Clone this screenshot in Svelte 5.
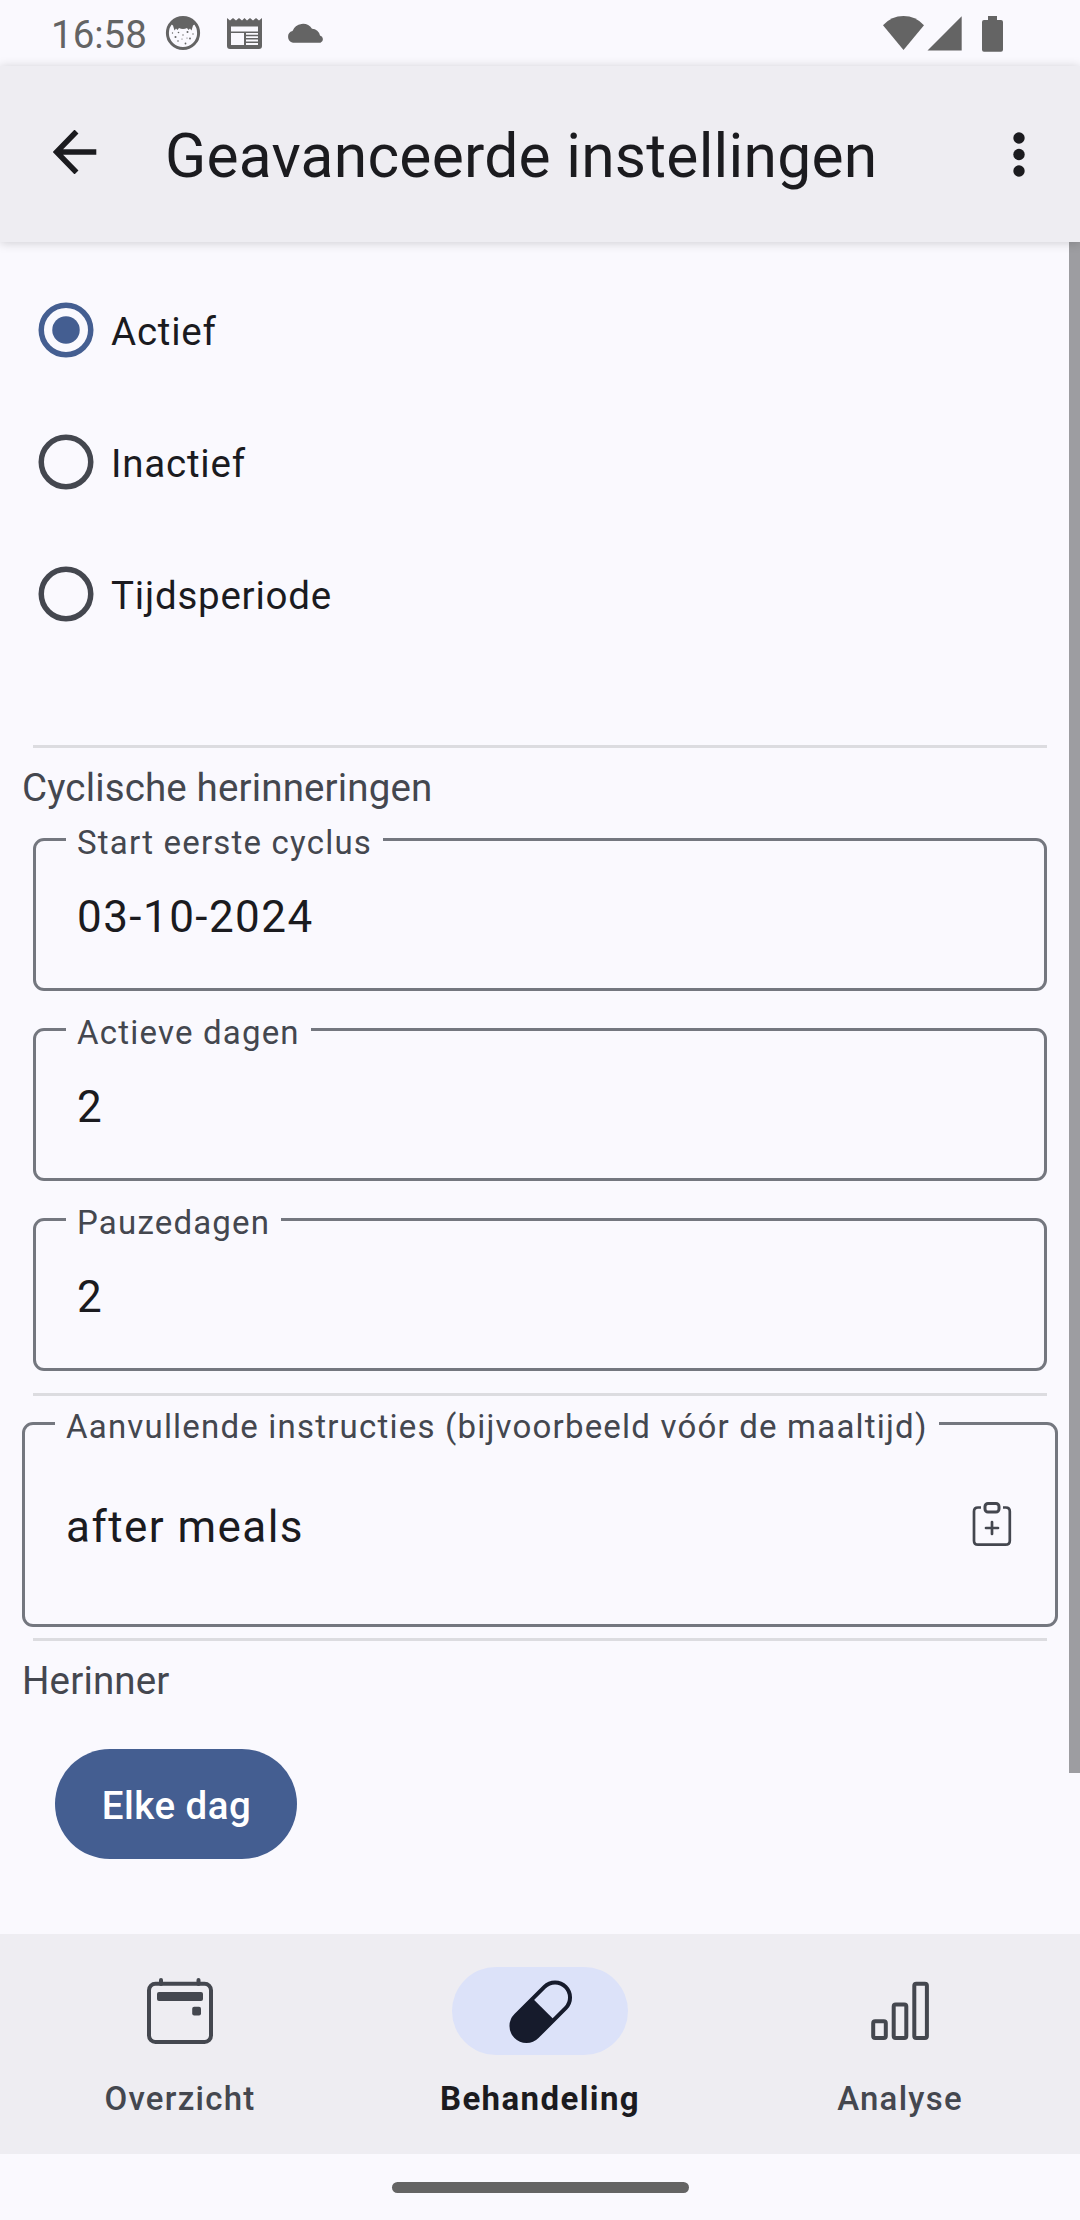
<script>
  let status = $state('Actief');
  const statuses = ['Actief', 'Inactief', 'Tijdsperiode'];
  const cycleFields = [
    { label: 'Start eerste cyclus', value: '03-10-2024' },
    { label: 'Actieve dagen', value: '2' },
    { label: 'Pauzedagen', value: '2' }
  ];
</script>

<div class="screen">
  <div class="statusbar">
    <span class="time">16:58</span>
    <svg class="cat" width="36" height="36" viewBox="0 0 36 36">
      <circle cx="18" cy="18" r="15.6" fill="none" stroke="#646464" stroke-width="3" />
      <path d="M8 6 Q18 0 28 6 L30 9 L28 10.500 L26.500 15.500 L25 13.500 L23.500 15 L22 13 Q18 15 14 13 L12.500 15 L11 13.500 L9.500 15.500 L8 10.500 L6 9 Z" fill="#646464" />
      <g fill="#646464">
        <circle cx="10.500" cy="22" r="1" /><circle cx="22.500" cy="17" r="1" /><circle cx="13.500" cy="17.500" r=".8" />
        <circle cx="18" cy="20" r=".7" /><circle cx="13" cy="26" r=".8" /><circle cx="20.500" cy="28.500" r=".9" />
        <circle cx="25" cy="23.500" r=".9" /><circle cx="28" cy="19" r=".7" /><circle cx="7.500" cy="18" r=".7" />
        <circle cx="17" cy="24" r=".6" /><circle cx="22" cy="23" r=".6" />
      </g>
    </svg>
    <svg class="news" width="35" height="31" viewBox="0 0 35 31">
      <path d="M0 0 L3 2.500 L6 0 L9 2.500 L12 0 L15 2.500 L17.500 0 L20 2.500 L23 0 L26 2.500 L29 0 L32 2.500 L35 0 V28 Q35 31 32 31 H3 Q0 31 0 28 Z" fill="#646464" />
      <path d="M4 8.500H31V13.500H4ZM4 15H17V27H4ZM19 15H31V16.800H19ZM19 18.300H31V20.100H19ZM19 21.600H31V23.400H19ZM19 25H31V27H19Z" fill="#faf9fe" />
    </svg>
    <svg class="cloud" width="38" height="21" viewBox="0 0 38 21">
      <path d="M6 20.700 A6 6 0 0 1 5.500 9 A11 11 0 0 1 25 6.800 A8 8 0 0 1 33 13.600 A3.700 3.700 0 0 1 33.500 20.700 Z" fill="#646464" />
    </svg>
    <svg class="system" width="124" height="38" viewBox="0 0 124 38">
      <path d="M20.500 36 L0 11.200 Q8.500 2 20.500 2 T41 11.200 Z" fill="#646464" />
      <path d="M44.500 36.500 L78.700 2.300 V36.500 Z" fill="#646464" />
      <path d="M105 2H114V6H118Q120 6 120 8V35.700Q120 37.700 118 37.700H101Q99 37.700 99 35.700V8Q99 6 101 6H105Z" fill="#646464" />
    </svg>
  </div>

  <header class="appbar">
    <svg class="back" width="44" height="44" viewBox="0 0 44 44">
      <path d="M23.500 1.500 L3.500 22 L23.500 42.500 M3.500 22 H43.300" fill="none" stroke="#1b1b1f" stroke-width="5.500" />
    </svg>
    <h1>Geavanceerde instellingen</h1>
    <svg class="more" width="12" height="45" viewBox="0 0 12 45">
      <g fill="#1b1b1f"><circle cx="6" cy="6" r="5.700" /><circle cx="6" cy="22.500" r="5.700" /><circle cx="6" cy="39" r="5.700" /></g>
    </svg>
  </header>

  <main>
    <div class="radios">
      {#each statuses as s}
        <label class="radio" class:on={s === status}>
          <input type="radio" name="status" value={s} bind:group={status} />
          <svg class="ring" width="56" height="56" viewBox="0 0 56 56">
            <circle cx="28" cy="28" r="24.750" fill="none" stroke="currentColor" stroke-width="5.500" />
            {#if s === status}<circle cx="28" cy="28" r="13.750" fill="currentColor" />{/if}
          </svg>
          <span class="name">{s}</span>
        </label>
      {/each}
    </div>

    <hr />
    <h2>Cyclische herinneringen</h2>
    <div class="fields">
      {#each cycleFields as f}
        <fieldset>
          <legend><span>{f.label}</span></legend>
          <div class="value">{f.value}</div>
        </fieldset>
      {/each}
    </div>

    <hr />
    <fieldset class="wide">
      <legend><span>Aanvullende instructies (bijvoorbeeld vóór de maaltijd)</span></legend>
      <div class="value">
        <span>after meals</span>
        <svg width="44" height="46" viewBox="0 0 44 46">
          <g fill="none" stroke="#44474f" stroke-width="2.700">
            <path d="M11 5.500H8Q4 5.500 4 9.500V38.700Q4 42.700 8 42.700H35.500Q39.800 42.700 39.800 38.700V9.500Q39.800 5.500 35.800 5.500H33" />
            <rect x="15" y="1.500" width="14" height="8.600" rx="3" stroke-width="3" />
            <path d="M22 20V32M16 26H28" stroke-linecap="round" />
          </g>
        </svg>
      </div>
    </fieldset>
    <hr />
    <h2>Herinner</h2>
    <button>Elke dag</button>
    <div class="scrollbar"></div>
  </main>

  <nav>
    <div class="tab">
      <div class="indicator">
        <svg width="66" height="66" viewBox="0 0 66 66">
          <rect x="2" y="5.700" width="62" height="58.300" rx="6.500" fill="none" stroke="#44474f" stroke-width="4" />
          <path d="M14 2V6M51.500 2V6" stroke="#44474f" stroke-width="4" stroke-linecap="round" />
          <rect x="10" y="14" width="46" height="9" rx="2" fill="#44474f" />
          <rect x="45.200" y="28.700" width="8.800" height="8.800" rx="2" fill="#44474f" />
        </svg>
      </div>
      <span>Overzicht</span>
    </div>
    <div class="tab active">
      <div class="indicator">
        <svg width="66" height="66" viewBox="0 0 66 66">
          <g transform="translate(33.750 33.750) rotate(-45)">
            <rect x="-35.200" y="-15" width="70.400" height="30" rx="15" fill="none" stroke="#161b2c" stroke-width="4" />
            <path d="M3.700 -15.500V15.500H-20A15.500 15.500 0 0 1 -20 -15.500Z" fill="#161b2c" />
          </g>
        </svg>
      </div>
      <span>Behandeling</span>
    </div>
    <div class="tab">
      <div class="indicator">
        <svg width="66" height="66" viewBox="0 0 66 66">
          <g fill="none" stroke="#44474f" stroke-width="4">
            <rect x="6.200" y="43.200" width="12.600" height="16.700" rx="2" />
            <rect x="26.700" y="26.500" width="12.600" height="33.400" rx="2" />
            <rect x="47.300" y="5.800" width="12.600" height="54.100" rx="2" />
          </g>
        </svg>
      </div>
      <span>Analyse</span>
    </div>
  </nav>
  <div class="gesture"><div class="handle"></div></div>
</div>

<style>
  :global(body) { margin: 0; background: #faf9fe; }
  .screen {
    width: 1080px;
    height: 2220px;
    display: flex;
    flex-direction: column;
    background: #faf9fe;
    color: #1b1b1f;
    font-family: Roboto, "Liberation Sans", sans-serif;
    overflow: hidden;
  }
  svg { display: block; flex: none; }

  .statusbar { height: 66px; display: flex; align-items: flex-start; flex: none; }
  .time { margin-left: 51px; width: 114px; font-size: 38.5px; line-height: 45px; padding-top: 12px; color: #646464; }
  .cat { margin-top: 15px; }
  .news { margin: 18px 0 0 26px; }
  .cloud { margin: 21.5px 0 0 25px; }
  .system { margin: 13.5px 73px 0 auto; }

  .appbar {
    height: 176px;
    flex: none;
    display: flex;
    align-items: center;
    background: #eeedf2;
    box-shadow: 0 1px 10px rgba(0, 0, 0, 0.18);
    position: relative;
    z-index: 1;
  }
  .back { margin: 0 0 4px 53px; }
  h1 {
    margin: 0;
    padding: 6px 0 0 68px;
    font-size: 60.5px;
    line-height: 72px;
    font-weight: 400;
    letter-spacing: 0.25px;
    flex: 1;
    white-space: nowrap;
  }
  .more { margin-right: 55px; }

  main { position: relative; flex: 1; }
  .radios { padding: 22px 0 85px 38px; }
  .radio { height: 132px; display: flex; align-items: center; }
  .radio input { position: absolute; opacity: 0; }
  .ring { color: #44474f; }
  .on .ring { color: #445e91; }
  .name { padding: 2px 0 0 17px; font-size: 38.5px; line-height: 45px; letter-spacing: 0.78px; }

  hr { margin: 0 33px; border: 0; height: 3px; background: #dcdce0; }
  h2 { margin: 17px 0 0 22px; font-size: 38.5px; line-height: 45px; font-weight: 400; letter-spacing: 0.15px; color: #44474f; }

  .fields { padding: 28px 33px 22px; display: flex; flex-direction: column; gap: 37px; }
  fieldset {
    box-sizing: border-box;
    height: 153px;
    margin: 0;
    padding: 0 30px;
    border: 3px solid #74777f;
    border-radius: 11px;
    min-width: 0;
  }
  legend { height: 3px; line-height: 3px; padding: 0 11px; font-size: 33px; letter-spacing: 1.2px; color: #44474f; white-space: nowrap; }
  legend span { position: relative; top: 3px; }
  .value {
    height: 147px;
    box-sizing: border-box;
    padding: 4px 11px 0;
    display: flex;
    align-items: center;
    justify-content: space-between;
    font-size: 44px;
    letter-spacing: 1.45px;
  }
  .wide { height: 205px; margin: 26px 22px 11px; }
  .wide .value { height: 199px; }
  .wide svg { margin-bottom: 4px; }

  button {
    display: block;
    margin: 46px 0 0 55px;
    width: 242px;
    height: 110px;
    padding: 2px 0 0 1px;
    border: 0;
    border-radius: 55px;
    background: #445e91;
    color: #fff;
    font: 500 38.5px/45px Roboto, "Liberation Sans", sans-serif;
    letter-spacing: 0.5px;
  }
  .scrollbar { position: absolute; top: 0; right: 0; width: 11px; height: 1531px; background: #9d9da1; }

  nav { height: 220px; flex: none; display: flex; background: #eeedf2; }
  .tab {
    flex: 1;
    display: flex;
    flex-direction: column;
    align-items: center;
    padding-top: 33px;
    font-size: 33px;
    line-height: 39px;
    font-weight: 500;
    letter-spacing: 1.25px;
    color: #44474f;
  }
  .indicator { width: 176px; height: 88px; border-radius: 44px; display: grid; place-items: center; margin-bottom: 24px; }
  .active { font-weight: 700; letter-spacing: 1.4px; color: #1b1b1f; }
  .active .indicator { background: #dce2f9; }

  .gesture { height: 66px; flex: none; display: grid; place-items: center; }
  .handle { width: 297px; height: 11px; border-radius: 6px; background: #646464; }
</style>
